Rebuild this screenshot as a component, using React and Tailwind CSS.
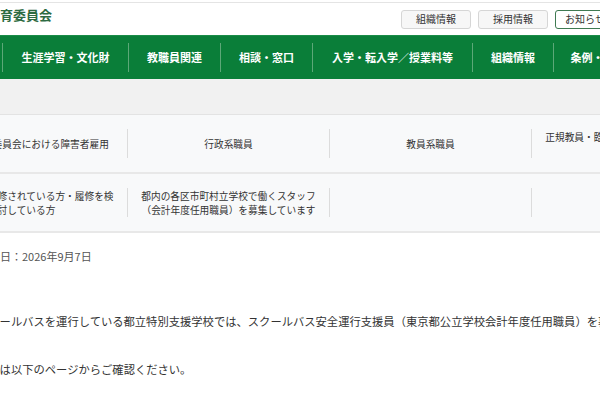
export default function App() {
  const navItems = [
    { label: "生涯学習・文化財", w: "w-[126px]" },
    { label: "教職員関連", w: "w-[92px]" },
    { label: "相談・窓口", w: "w-[92px]" },
    { label: "入学・転入学／授業料等", w: "w-[160px]" },
    { label: "組織情報", w: "w-[81px]" },
    { label: "条例・規則等", w: "w-[100px]" },
  ];

  const rows = [
    [
      "東京都教育委員会における障害者雇用",
      "行政系職員",
      "教員系職員",
      "正規教員・臨時的任用教員・講師等の採用選考",
    ],
    [
      "教職課程を履修されている方・履修を検討している方",
      "都内の各区市町村立学校で働くスタッフ（会計年度任用職員）を募集しています",
      "",
      "",
    ],
  ];

  return (
    <div
      className="w-[600px] h-[400px] overflow-hidden bg-white text-[#333]"
      style={{ fontFamily: '"Noto Sans CJK JP", "Noto Sans", sans-serif' }}
    >
      {/* header */}
      <div className="pt-[2px]">
        <div className="flex h-[33px] items-center border-t border-[#e4e4e4]">
          <div className="ml-[-52px] shrink-0 self-start pt-[2px] text-[13px] font-bold leading-[19px] whitespace-nowrap text-[#2d6b42]">
            東京都教育委員会
          </div>
          <div className="ml-[349px] flex shrink-0 gap-[7px]">
            <div className="flex h-[19px] w-[70px] items-center justify-center rounded-[3px] border border-[#d6d6d6] bg-[#f7f7f7] text-[10px] leading-none">
              組織情報
            </div>
            <div className="flex h-[19px] w-[70px] items-center justify-center rounded-[3px] border border-[#d6d6d6] bg-[#f7f7f7] text-[10px] leading-none">
              採用情報
            </div>
            <div className="flex h-[19px] w-[80px] items-center justify-center rounded-[3px] border border-[#3f7a52] bg-white text-[10px] leading-none">
              お知らせ一覧
            </div>
          </div>
        </div>
      </div>

      {/* global navigation */}
      <div className="flex h-[44px] items-center border-t border-[#1b8c48] bg-[#0a7e39]">
        <div className="ml-[2px] flex shrink-0 items-center">
          {navItems.map((item) => (
            <div
              key={item.label}
              className={`${item.w} flex h-[29px] shrink-0 items-center justify-center border-l border-[#5ca878] text-[11px] font-bold whitespace-nowrap text-white`}
            >
              {item.label}
            </div>
          ))}
        </div>
      </div>

      {/* breadcrumb band */}
      <div className="h-[36px] border-b border-[#e3e3e3] bg-[#f1f1f1]" />

      {/* category grid */}
      <div className="ml-[-74px] w-[808px] bg-[#f8f9fa]">
        {rows.map((row, ri) => (
          <div key={ri} className="flex h-[59px] border-b-2 border-[#e8e8e8]">
            {row.map((cell, ci) => (
              <div key={ci} className="flex shrink-0">
                {ci > 0 && <div className="my-[14px] w-px bg-[#dcdcdc]" />}
                <div className="flex w-[201px] items-center justify-center px-[12px] text-center text-[9.7px] leading-[14px] text-[#333]">
                  {cell}
                </div>
              </div>
            ))}
          </div>
        ))}
      </div>

      {/* article */}
      <div className="ml-[-22px]">
        <div className="mt-[15px] text-[11px] leading-[16px] whitespace-nowrap text-[#555]">
          更新日：2026年9月7日
        </div>
        <p className="ml-[-1px] mt-[49px] text-[11.3px] leading-[16px] whitespace-nowrap text-[#333]">
          スクールバスを運行している都立特別支援学校では、スクールバス安全運行支援員（東京都公立学校会計年度任用職員）を募集しています。
        </p>
        <p className="ml-[-1px] mt-[32px] text-[11.3px] leading-[16px] whitespace-nowrap text-[#333]">
          詳細は以下のページからご確認ください。
        </p>
      </div>
    </div>
  );
}
